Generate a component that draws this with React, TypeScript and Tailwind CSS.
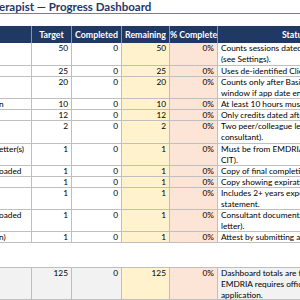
import React from 'react'

type Row = {
  label: string
  target: number
  status: string[]
  h: string
}

const rows: Row[] = [
  { label: '', target: 50, status: ['Counts sessions dated on or after', '(see Settings).'], h: 'h-[23px]' },
  { label: '', target: 25, status: ['Uses de-identified Client IDs only.'], h: 'h-[11px]' },
  { label: '', target: 20, status: ['Counts only after Basic Training', 'window if app date entered.'], h: 'h-[22px]' },
  { label: 'n', target: 10, status: ['At least 10 hours must be individual.'], h: 'h-[11px]' },
  { label: '', target: 12, status: ['Only credits dated after training.'], h: 'h-[11px]' },
  { label: '', target: 2, status: ['Two peer/colleague letters (not', 'consultant).'], h: 'h-[23px]' },
  { label: 'etter(s)', target: 1, status: ['Must be from EMDRIA Consultant (or', 'CIT).'], h: 'h-[22px]' },
  { label: 'oaded', target: 1, status: ['Copy of final completion certificate.'], h: 'h-[11px]' },
  { label: '', target: 1, status: ['Copy showing expiration date.'], h: 'h-[11px]' },
  { label: '', target: 1, status: ['Includes 2+ years experience', 'statement.'], h: 'h-[22px]' },
  { label: 'oaded', target: 1, status: ['Consultant documentation (recommendation', 'letter).'], h: 'h-[22px]' },
  { label: 'n)', target: 1, status: ['Attest by submitting application.'], h: 'h-[11px]' },
]

const cols = 'grid grid-cols-[32px_40px_50px_48px_48px_184px]'
const cell = 'border-r border-b border-[#bfbfbf] overflow-hidden whitespace-nowrap'

export default function App() {
  return (
    <div className="w-[300px] h-[300px] overflow-hidden bg-white font-[Lato,sans-serif] text-[8.3px] leading-[11px] text-black">
      {/* title */}
      <div className="h-[13px] flex items-end text-[11.5px] leading-[13px] font-bold text-[#1f3864] whitespace-nowrap -ml-[1px]">
        erapist — Progress Dashboard
      </div>
      <div className="h-[1px] bg-[#5b82c4] w-[300px]" />
      <div className="h-[12px]" />

      {/* header */}
      <div className={`${cols} h-[17px] bg-[#1f3864] text-white font-bold text-[8.8px] whitespace-nowrap`}>
        <div className="border-r border-[#8497b0]" />
        <div className="border-r border-[#8497b0] flex items-center justify-center">Target</div>
        <div className="border-r border-[#8497b0] flex items-center justify-center">Completed</div>
        <div className="border-r border-[#8497b0] flex items-center justify-center">Remaining</div>
        <div className="border-r border-[#8497b0] flex items-center justify-center">% Complete</div>
        <div className="flex items-center justify-center">Status / Notes</div>
      </div>

      {rows.map((r, i) => (
        <div key={i} className={`${cols} ${r.h}`}>
          <div className={`${cell} pl-0`}>
            <span className="-ml-[1px]">{r.label}</span>
          </div>
          <div className={`${cell} text-right pr-[3px]`}>{r.target}</div>
          <div className={`${cell} text-right pr-[3px]`}>0</div>
          <div className={`${cell} bg-[#fff2cc] text-right pr-[3px]`}>{r.target}</div>
          <div className={`${cell} bg-[#fce4d6] text-right pr-[3px]`}>0%</div>
          <div className={`${cell} pl-[3px]`}>
            {r.status.map((s, j) => (
              <div key={j}>{s}</div>
            ))}
          </div>
        </div>
      ))}

      <div className="h-[24px]" />

      {/* totals */}
      <div className={`${cols} h-[33px] border-t border-[#bfbfbf]`}>
        <div className={`${cell} bg-[#f2f2f2]`} />
        <div className={`${cell} bg-[#f2f2f2] text-right pr-[3px]`}>125</div>
        <div className={`${cell} bg-[#f2f2f2] text-right pr-[3px]`}>0</div>
        <div className={`${cell} bg-[#fff2cc] text-right pr-[3px]`}>125</div>
        <div className={`${cell} bg-[#fce4d6] text-right pr-[3px]`}>0%</div>
        <div className={`${cell} bg-[#f2f2f2] pl-[3px]`}>
          <div>Dashboard totals are for tracking only;</div>
          <div>EMDRIA requires official documentation with</div>
          <div>application.</div>
        </div>
      </div>
    </div>
  )
}
